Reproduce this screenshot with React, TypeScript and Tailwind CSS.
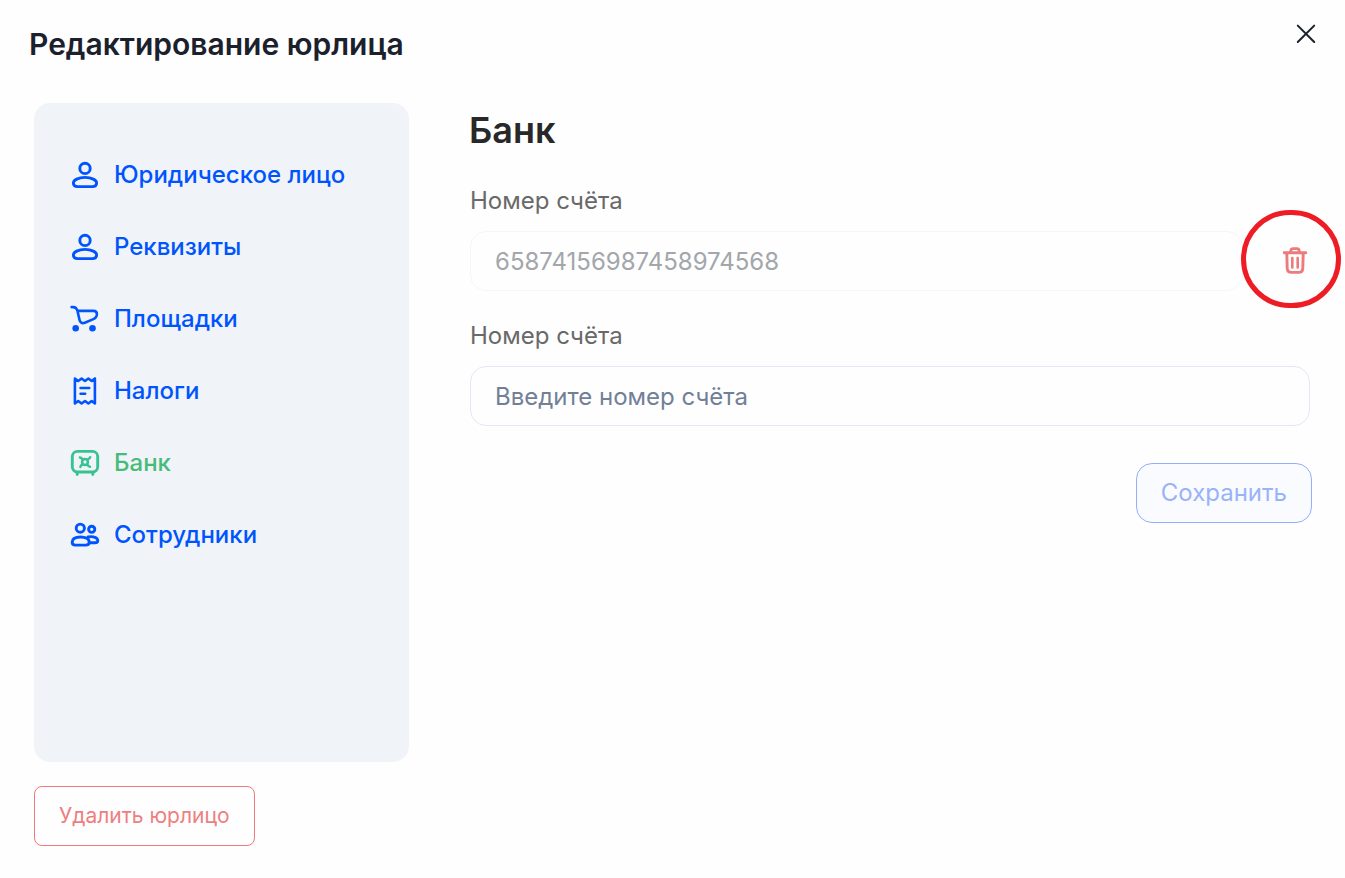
import type { ReactNode } from 'react';

function Icon({ children }: { children: ReactNode }) {
  return (
    <svg
      viewBox="0 0 30 30"
      className="size-[30px] shrink-0"
      fill="none"
      stroke="currentColor"
      strokeWidth="2.9"
      strokeLinecap="round"
      strokeLinejoin="round"
      aria-hidden="true"
    >
      {children}
    </svg>
  );
}

function UserIcon() {
  return (
    <Icon>
      <circle cx="15" cy="8.4" r="5.2" />
      <path d="M15 17.4C8.4 17.4 3.4 20 3.4 23.1C3.4 25.6 5 26.6 7.6 26.6H22.4C25 26.6 26.6 25.6 26.6 23.1C26.6 20 21.6 17.4 15 17.4Z" />
    </Icon>
  );
}

function CartIcon() {
  return (
    <Icon>
      <path
        d="M1.6 3.1H3.2C5.2 3.1 6.3 4 6.9 5.6L7.5 7L9.4 15.4C10 18.6 11.9 19.8 14.8 18.7L22.8 15.4C25.6 14.2 26.9 12.6 26.9 10.2C26.9 8 25.8 6.9 23.6 6.9H7.6"
        strokeWidth="2.6"
      />
      <circle cx="5.7" cy="24.3" r="3.3" fill="currentColor" stroke="none" />
      <circle cx="22.5" cy="24.3" r="3.3" fill="currentColor" stroke="none" />
    </Icon>
  );
}

function ReceiptIcon() {
  return (
    <Icon>
      <path
        d="M4.9 2.5L8.2 5L11.6 2.5L15 5L18.4 2.5L21.7 5L24.9 2.5V27.5L21.7 25L18.4 27.5L15 25L11.6 27.5L8.2 25L4.9 27.5Z"
        strokeWidth="2.6"
      />
      <path d="M10.6 12H19.2M10.6 17.7H15.2" strokeWidth="2.6" />
    </Icon>
  );
}

function SafeIcon() {
  return (
    <Icon>
      <rect x="2.3" y="3.4" width="25.4" height="20.6" rx="5.2" />
      <path d="M7.2 24.4V26.6M22.8 24.4V26.6" />
      <circle cx="15" cy="14" r="2.9" strokeWidth="2.5" />
      <path d="M9.9 9.4Q11.6 9.6 12.6 11.6M20.2 9.2Q20 10.8 17.4 11.6M10.4 18.9Q10.6 17.4 12.6 16.4M20 18.8Q18.4 18.6 17.4 16.4" strokeWidth="2.5" />
    </Icon>
  );
}

function TeamIcon() {
  return (
    <Icon>
      <circle cx="10.3" cy="8.2" r="4.1" />
      <circle cx="21.7" cy="9.3" r="3.1" />
      <path d="M10.6 17C5.8 17 2.2 18.8 2.2 22.2C2.2 24.2 3.4 25.1 5.4 25.1H15.8C17.9 25.1 19.2 24.2 19.2 22.2C19.2 18.8 15.4 17 10.6 17Z" />
      <path d="M18 17C23.4 15.8 27.8 17.8 27.8 20.6C27.8 22.2 26.8 22.8 25.2 22.8H19.6" />
    </Icon>
  );
}

function TrashIcon() {
  return (
    <Icon>
      <path d="M4.2 6.8H25.8M10.8 6.2V5C10.8 3.4 11.7 2.6 13.2 2.6H16.8C18.3 2.6 19.2 3.4 19.2 5V6.2" />
      <path d="M6.8 7.4L7.2 22.2C7.3 25.2 8.6 26.4 11.4 26.4H18.6C21.4 26.4 22.7 25.2 22.8 22.2L23.2 7.4" />
      <path d="M12.3 12V21.4M17.7 12V21.4" strokeWidth="2.6" />
    </Icon>
  );
}

const sections = [
  { title: 'Юридическое лицо', icon: <UserIcon /> },
  { title: 'Реквизиты', icon: <UserIcon /> },
  { title: 'Площадки', icon: <CartIcon /> },
  { title: 'Налоги', icon: <ReceiptIcon /> },
  { title: 'Банк', icon: <SafeIcon />, active: true },
  { title: 'Сотрудники', icon: <TeamIcon /> },
];

export default function App() {
  return (
    <div className="flex min-h-screen flex-col overflow-hidden bg-[#fefefe] pb-8 font-['Inter',sans-serif]">
      <header className="flex items-start justify-between pt-4 pr-[21px] pb-9 pl-[29px]">
        <h1 className="pt-1.5 text-[30px] leading-[45px] font-semibold text-[#1a202c]">Редактирование юрлица</h1>
        <button type="button" aria-label="Закрыть" className="flex size-9 items-center justify-center text-[#1a202c]">
          <svg viewBox="0 0 20 20" className="size-5" stroke="currentColor" strokeWidth="2" strokeLinecap="round" aria-hidden="true">
            <path d="M1.8 1.6L18.2 18M18.2 1.6L1.8 18" />
          </svg>
        </button>
      </header>

      <main className="flex gap-[60px] pr-[35px] pl-[34px]">
        <div className="flex w-[375px] shrink-0 flex-col items-start gap-6">
          <nav className="min-h-[659px] w-full rounded-2xl bg-[#f0f4f9] px-9 py-9">
            <ul>
              {sections.map((section) => (
                <li key={section.title}>
                  <a
                    href="#"
                    className={
                      section.active
                        ? 'flex h-18 items-center gap-3.5 text-2xl font-medium text-[#48bb78]'
                        : 'flex h-18 items-center gap-3.5 text-2xl font-medium text-[#0054fe]'
                    }
                  >
                    <span className={section.active ? 'text-[#38c292]' : undefined}>{section.icon}</span>
                    <span className="whitespace-nowrap">{section.title}</span>
                  </a>
                </li>
              ))}
            </ul>
          </nav>
          <button type="button" className="h-15 rounded-lg border border-[#ee7a7a] px-6 text-[21px] text-[#ee7f7f]">
            Удалить юрлицо
          </button>
        </div>

        <form className="flex min-w-0 flex-1 flex-col">
          <h2 className="text-4xl leading-[54px] font-semibold text-[#282828]">Банк</h2>

          <div className="flex flex-col gap-3 pt-[26px] pl-px">
            <label htmlFor="saved-account" className="text-2xl leading-9 text-[#696969]">
              Номер счёта
            </label>
            <div className="flex items-center">
              <input
                id="saved-account"
                type="text"
                disabled
                defaultValue="65874156987458974568"
                className="h-15 min-w-0 flex-1 rounded-2xl border border-[#f4f6f9] px-6 text-2xl text-[#a3a6ab]"
              />
              <button
                type="button"
                aria-label="Удалить счёт"
                className="relative flex h-15 w-[67px] items-center justify-end text-[#ec7b7b]"
              >
                <TrashIcon />
                <span className="pointer-events-none absolute -top-[21px] -right-[31px] h-[98px] w-[100px] rounded-full border-[5px] border-[#ee1c24]" />
              </button>
            </div>
          </div>

          <div className="flex flex-col gap-3 pt-[27px] pl-px">
            <label htmlFor="new-account" className="text-2xl leading-9 text-[#696969]">
              Номер счёта
            </label>
            <input
              id="new-account"
              type="text"
              placeholder="Введите номер счёта"
              className="h-15 w-full rounded-2xl border border-[#e2e8f4] px-6 text-2xl placeholder:text-[#718096]"
            />
          </div>

          <button
            type="submit"
            disabled
            className="-mr-0.5 mt-[37px] h-15 self-end rounded-2xl border border-[#94aff7] bg-[#f9fbff] px-6 text-2xl text-[#99b3f8]"
          >
            Сохранить
          </button>
        </form>
      </main>
    </div>
  );
}
